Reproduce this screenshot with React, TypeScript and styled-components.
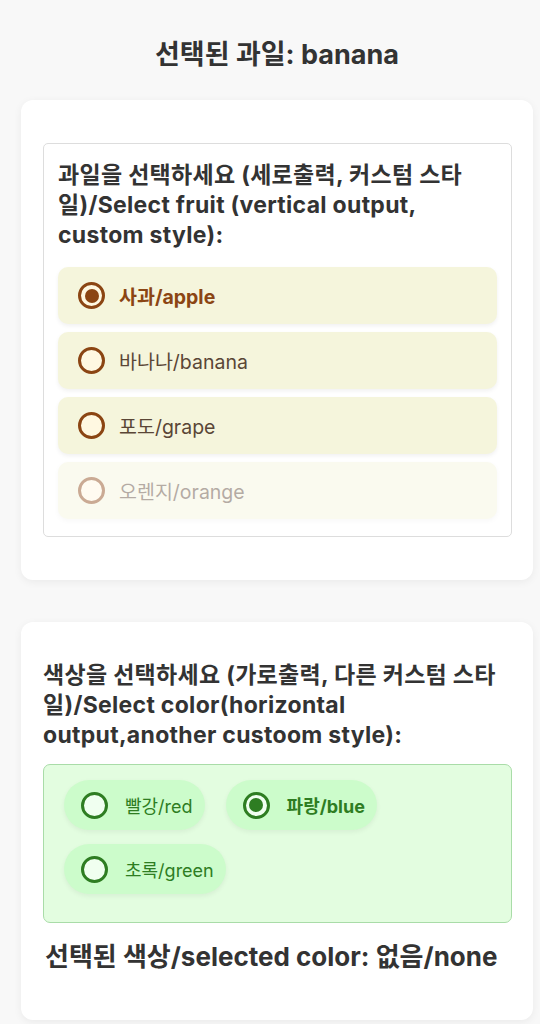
import React, { useState } from 'react';
import styled, { createGlobalStyle } from 'styled-components';

const GlobalStyle = createGlobalStyle`
  html, body { margin: 0; padding: 0; background: #f8f8f8; }
  body {
    font-family: Inter, "Noto Sans CJK KR", "Noto Sans", sans-serif;
    color: #333;
    -webkit-font-smoothing: antialiased;
  }
  * { box-sizing: border-box; }
`;

const Page = styled.div`
  width: 512px;
  margin-left: 21px;
  padding-top: 39px;
  padding-bottom: 40px;
  display: flex;
  flex-direction: column;
`;

const Title = styled.h2`
  margin: 0 0 29px;
  font-size: 27px;
  line-height: 32px;
  font-weight: 700;
  text-align: center;
  color: #333;
`;

const Card = styled.section<{ $pt: number; $pb: number }>`
  background: #fff;
  border-radius: 12px;
  box-shadow: 0 2px 8px rgba(0, 0, 0, 0.06);
  padding: ${(p) => p.$pt}px 21px ${(p) => p.$pb}px 22px;
  & + & { margin-top: 42px; }
`;

const FruitBox = styled.div`
  border: 1px solid #ddd;
  border-radius: 5px;
  padding: 16px 14px 17px 14px;
`;

const Heading = styled.h3`
  margin: 0;
  font-size: 23px;
  line-height: 30px;
  letter-spacing: 0.3px;
  font-weight: 700;
  color: #333;
`;

const OptionList = styled.div`
  display: flex;
  flex-direction: column;
  gap: 8px;
  margin-top: 17px;
`;

const OptionRow = styled.label<{ $disabled?: boolean }>`
  display: flex;
  align-items: center;
  gap: 14px;
  height: 57px;
  padding-left: 20px;
  background: #f5f5dc;
  border-radius: 10px;
  box-shadow: 0 2px 4px rgba(0, 0, 0, 0.06);
  opacity: ${(p) => (p.$disabled ? 0.45 : 1)};
  cursor: ${(p) => (p.$disabled ? 'not-allowed' : 'pointer')};
`;

const Radio = styled.input<{ $ring: string; $fill: string; $size: number }>`
  appearance: none;
  -webkit-appearance: none;
  margin: 0;
  flex: none;
  width: ${(p) => p.$size}px;
  height: ${(p) => p.$size}px;
  border-radius: 50%;
  border: 3px solid ${(p) => p.$ring};
  background: ${(p) => p.$fill};
  display: grid;
  place-items: center;
  &:checked::after {
    content: '';
    width: 14px;
    height: 14px;
    border-radius: 50%;
    background: ${(p) => p.$ring};
  }
`;

const OptionText = styled.span<{ $checked?: boolean }>`
  font-size: 19.5px;
  font-weight: ${(p) => (p.$checked ? 700 : 400)};
  color: ${(p) => (p.$checked ? '#8b4513' : '#5a4636')};
`;

const ColorBox = styled.div`
  margin-top: 14px;
  background: #e3fde0;
  border: 1px solid #a9dca8;
  border-radius: 7px;
  padding: 15px 20px 28px;
  display: flex;
  flex-wrap: wrap;
  gap: 14px 21px;
`;

const Pill = styled.label`
  display: flex;
  align-items: center;
  gap: 17px;
  height: 50px;
  padding: 0 12px 0 17px;
  background: #ccfccb;
  border-radius: 25px;
  box-shadow: 0 2px 5px rgba(0, 0, 0, 0.06);
  cursor: pointer;
`;

const PillText = styled.span<{ $checked?: boolean }>`
  font-size: 18px;
  font-weight: ${(p) => (p.$checked ? 700 : 400)};
  color: #2e7d22;
`;

const Result = styled.p`
  margin: 18px 0 0 2px;
  font-size: 26px;
  line-height: 32px;
  font-weight: 700;
  color: #333;
`;

const fruits = [
  { value: 'apple', label: '사과/apple' },
  { value: 'banana', label: '바나나/banana' },
  { value: 'grape', label: '포도/grape' },
  { value: 'orange', label: '오렌지/orange', disabled: true },
];

const colors = [
  { value: 'red', label: '빨강/red' },
  { value: 'blue', label: '파랑/blue' },
  { value: 'green', label: '초록/green' },
];

export default function App() {
  const [fruit, setFruit] = useState('apple');
  const [color, setColor] = useState('blue');
  const shownFruit = 'banana';
  const shownColor = '없음/none';

  return (
    <>
      <GlobalStyle />
      <Page>
        <Title>선택된 과일: {shownFruit}</Title>
        <Card $pt={43} $pb={43}>
          <FruitBox>
            <Heading>과일을 선택하세요 (세로출력, 커스텀 스타일)/Select fruit (vertical output, custom style):</Heading>
            <OptionList>
              {fruits.map((f) => (
                <OptionRow key={f.value} $disabled={f.disabled}>
                  <Radio
                    type="radio"
                    name="fruit"
                    value={f.value}
                    checked={fruit === f.value}
                    disabled={f.disabled}
                    onChange={() => setFruit(f.value)}
                    $ring="#8b4513"
                    $fill="#fff8e1"
                    $size={27}
                  />
                  <OptionText $checked={fruit === f.value}>{f.label}</OptionText>
                </OptionRow>
              ))}
            </OptionList>
          </FruitBox>
        </Card>
        <Card $pt={38} $pb={47}>
          <Heading>색상을 선택하세요 (가로출력, 다른 커스텀 스타일)/Select color(horizontal output,another custoom style):</Heading>
          <ColorBox>
            {colors.map((c) => (
              <Pill key={c.value}>
                <Radio
                  type="radio"
                  name="color"
                  value={c.value}
                  checked={color === c.value}
                  onChange={() => setColor(c.value)}
                  $ring="#2e7d22"
                  $fill="#f0fff0"
                  $size={27}
                />
                <PillText $checked={color === c.value}>{c.label}</PillText>
              </Pill>
            ))}
          </ColorBox>
          <Result>선택된 색상/selected color: {shownColor}</Result>
        </Card>
      </Page>
    </>
  );
}
